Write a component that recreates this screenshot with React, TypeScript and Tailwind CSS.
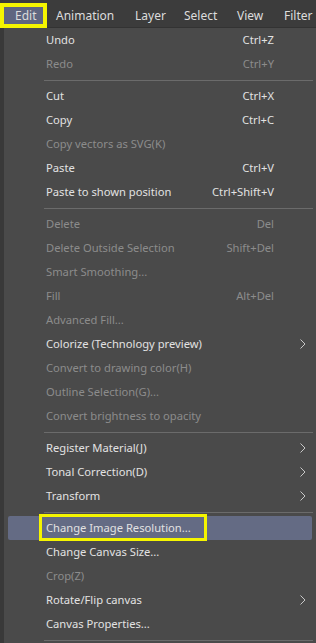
import React from "react"

type Item =
  | { sep: true }
  | { label: string; key?: string; off?: boolean; sub?: boolean; hot?: boolean }

const items: Item[] = [
  { label: "Undo", key: "Ctrl+Z" },
  { label: "Redo", key: "Ctrl+Y", off: true },
  { sep: true },
  { label: "Cut", key: "Ctrl+X" },
  { label: "Copy", key: "Ctrl+C" },
  { label: "Copy vectors as SVG(K)", off: true },
  { label: "Paste", key: "Ctrl+V" },
  { label: "Paste to shown position", key: "Ctrl+Shift+V" },
  { sep: true },
  { label: "Delete", key: "Del", off: true },
  { label: "Delete Outside Selection", key: "Shift+Del", off: true },
  { label: "Smart Smoothing...", off: true },
  { label: "Fill", key: "Alt+Del", off: true },
  { label: "Advanced Fill...", off: true },
  { label: "Colorize (Technology preview)", sub: true },
  { label: "Convert to drawing color(H)", off: true },
  { label: "Outline Selection(G)...", off: true },
  { label: "Convert brightness to opacity", off: true },
  { sep: true },
  { label: "Register Material(J)", sub: true },
  { label: "Tonal Correction(D)", sub: true },
  { label: "Transform", sub: true },
  { sep: true },
  { label: "Change Image Resolution...", hot: true },
  { label: "Change Canvas Size..." },
  { label: "Crop(Z)", off: true },
  { label: "Rotate/Flip canvas", sub: true },
  { label: "Canvas Properties..." },
  { sep: true },
]

// menubar entries with their slot widths
const menus = [
  { name: "Animation", w: "w-[88px]" },
  { name: "Layer", w: "w-[49px]" },
  { name: "Select", w: "w-[53px]" },
  { name: "View", w: "w-[47px]" },
  { name: "Filter", w: "w-[34px]" },
]

function Chevron() {
  return (
    <svg width="6" height="10" viewBox="0 0 6 10" className="shrink-0">
      <polyline points="0.5,0.5 5,5 0.5,9.5" fill="none" stroke="#c8c8c8" strokeWidth="1" />
    </svg>
  )
}

function Row({ item }: { item: Item }) {
  if ("sep" in item) {
    return (
      <div className="flex h-[8px] items-center pl-[40px] pr-[3px]">
        <div className="h-px w-full bg-[#6b6b6b]" />
      </div>
    )
  }
  const tone = item.off ? "text-[#8c8c8c]" : "text-[#e2e2e2]"
  return (
    <div
      className={
        "relative mx-[4px] flex h-[24px] items-center pl-[38px] pr-[6px] " +
        (item.hot ? "rounded-[2px] bg-[#646b84]" : "")
      }
    >
      <span className={"flex-1 " + tone}>{item.label}</span>
      {item.key && <span className={"mr-[32px] " + tone}>{item.key}</span>}
      {item.sub && <Chevron />}
      {item.hot && (
        <div className="absolute left-[31px] top-[-2px] h-[27px] w-[168px] border-[3px] border-[#f5f500]" />
      )}
    </div>
  )
}

export default function App() {
  return (
    <div
      className="h-[643px] w-[316px] overflow-hidden bg-[#3c3c3c] text-[11.2px]"
      style={{ fontFamily: '"Noto Sans", "Open Sans", sans-serif' }}
    >
      <div className="flex h-[28px] items-end whitespace-nowrap text-[12px] text-[#dcdcdc] shadow-[inset_0_-1px_0_#333333]">
        <div className="flex h-[25px] w-[47px] shrink-0 items-center border-[4px] border-[#f5f500] bg-[#5f6680] pl-[11px]">
          Edit
        </div>
        {menus.map((m) => (
          <span key={m.name} className={"flex h-[25px] shrink-0 items-center " + m.w + (m.name === "Animation" ? " pl-[9px]" : "")}>
            {m.name}
          </span>
        ))}
      </div>
      <div className="flex">
        <div className="w-[4px] bg-[#393939]" />
        <div className="flex-1 bg-[#4a4a4a]">
          {items.map((it, i) => (
            <Row key={i} item={it} />
          ))}
        </div>
      </div>
    </div>
  )
}
